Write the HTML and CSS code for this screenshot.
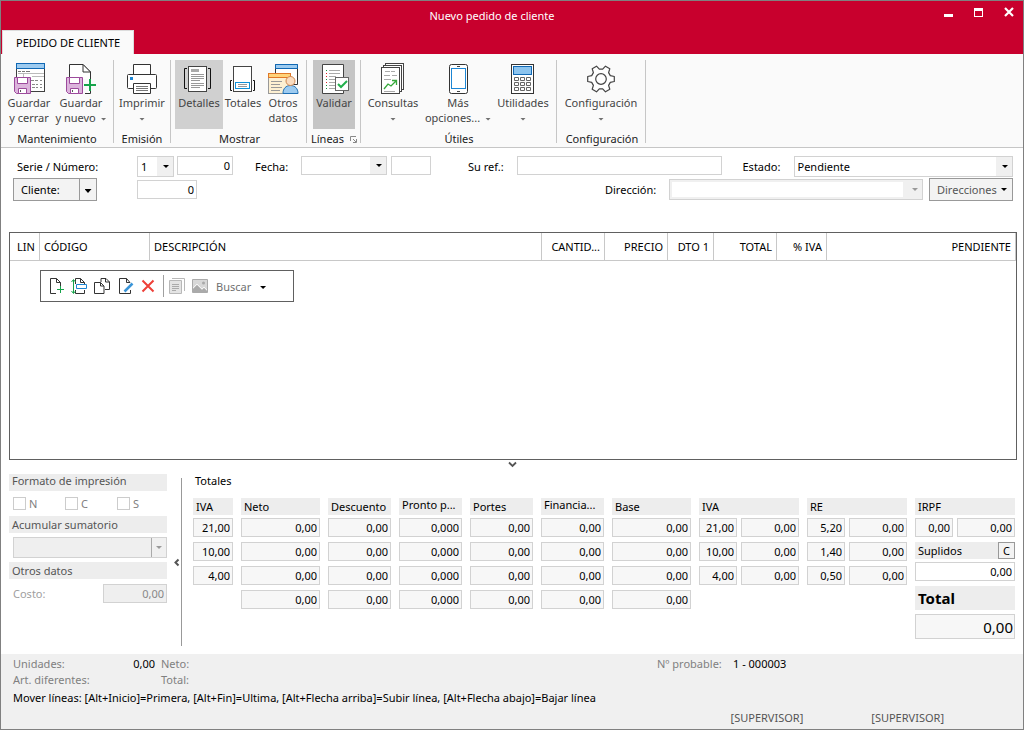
FILE: index.html
```html
<!DOCTYPE html>
<html lang="es">
<head>
<meta charset="utf-8">
<title>Nuevo pedido de cliente</title>
<link rel="stylesheet" href="styles.css">
</head>
<body>
<div class="window">
  <header class="titlebar">
    <div class="title-row">
      <h1 class="title">Nuevo pedido de cliente</h1>
      <div class="window-controls">
        <button class="win-btn" aria-label="Minimizar"><svg width="10" height="10" viewBox="0 0 10 10"><path d="M0 7h9v3H0z" fill="#fff"/></svg></button>
        <button class="win-btn" aria-label="Maximizar"><svg width="10" height="10" viewBox="0 0 10 10"><path d="M0 1h9v9H0zM1 4v5h7V4z" fill="#fff" fill-rule="evenodd"/></svg></button>
        <button class="win-btn" aria-label="Cerrar"><svg width="10" height="10" viewBox="0 0 10 10"><path d="M1 1l8 8M9 1l-8 8" stroke="#fff" stroke-width="2.200"/></svg></button>
      </div>
    </div>
    <nav class="tabs"><a class="tab" href="#pedido">PEDIDO DE CLIENTE</a></nav>
  </header>

  <div class="ribbon" id="pedido">
    <section class="group g-mant">
      <div class="tools">
        <button class="tool w52">
          <svg width="34" height="34" viewBox="0 0 34 34" fill="none"><rect x="4.500" y="1.500" width="28" height="28" fill="#fff" stroke="#404040"/><rect x="4.500" y="1.500" width="28" height="5" fill="#9dcbf0" stroke="#1068b4"/><path d="M6 9.500h3M10 9.500h3M14 9.500h4" stroke="#777"/><path d="M6 11.500h26M11.500 11v4M20 14.500h12" stroke="#bbb"/><path d="M19 18.500h3M23 18.500h3M28 18.500h2M20 22.500h3M24 22.500h2M28 22.500h2M20 25.500h3M24 25.500h2M28 25.500h2" stroke="#888"/><path d="M2.500 15.500h16v16h-14l-2-2z" fill="#dcb4dc" stroke="#9c4a9c"/><path d="M5.500 15.500h10v6h-10zM6.500 26.500h8v5h-8z" fill="#fff" stroke="#9c4a9c"/><path d="M8.500 28v2" stroke="#555"/></svg>
          <span>Guardar<br>y cerrar</span>
        </button>
        <button class="tool w52">
          <svg width="34" height="34" viewBox="0 0 34 34" fill="none"><path d="M5.500 15V2.500H19L26.500 10v8M26.500 28v3.500H21" fill="#fff" stroke="#333"/><path d="M19 2.500V10h7.500z" fill="#fff" stroke="#333"/><path d="M2.500 15.500h16v16h-14l-2-2z" fill="#dcb4dc" stroke="#9c4a9c"/><path d="M5.500 15.500h10v6h-10zM6.500 26.500h8v5h-8z" fill="#fff" stroke="#9c4a9c"/><path d="M8.500 28v2" stroke="#555"/><path d="M20 23h12M26 17v12" stroke="#16a34a" stroke-width="2"/></svg>
          <span>Guardar<br>y nuevo <i class="caret"></i></span>
        </button>
      </div>
      <h2 class="group-name">Mantenimiento</h2>
    </section>
    <section class="group g-emis">
      <div class="tools">
        <button class="tool w52">
          <svg width="34" height="34" viewBox="0 0 34 34" fill="none"><path d="M8.500 12.500v-10h17v10" fill="#fff" stroke="#333"/><rect x="2.500" y="12.500" width="29" height="14" rx="1" fill="#fff" stroke="#333"/><path d="M5 15h3v3H5z" fill="#1d86d4"/><path d="M8.500 21.500h17v10h-17z" fill="#fff" stroke="#333"/><path d="M11 24.500h12M11 26.500h12M11 28.500h12" stroke="#777"/></svg>
          <span>Imprimir<br><i class="caret lone"></i></span>
        </button>
      </div>
      <h2 class="group-name">Emisión</h2>
    </section>
    <section class="group g-most">
      <div class="tools">
        <button class="tool w48 on">
          <svg width="34" height="34" viewBox="0 0 34 34" fill="none"><rect x="6.500" y="4.500" width="18" height="25" fill="#fff" stroke="#444"/><path d="M9 7h8v3H9z" fill="#aaa"/><path d="M9 12.500h13M9 14.500h13M9 16.500h13M9 18.500h9M9 21.500h13M9 23.500h13M9 25.500h9" stroke="#999"/><path d="M5 6.500H2.500v20H5M26 6.500h2.500v20H26" stroke="#111"/></svg>
          <span>Detalles</span>
        </button>
        <button class="tool w40">
          <svg width="34" height="34" viewBox="0 0 34 34" fill="none"><rect x="7.500" y="4.500" width="18" height="25" fill="#fff" stroke="#444"/><rect x="9.500" y="20.500" width="14" height="6" fill="#fff" stroke="#1090d8"/><path d="M12 22.500h9M12 24.500h9" stroke="#999"/><path d="M6 18.500H4.500v10H6M27 18.500h1.500v10H27" stroke="#111"/></svg>
          <span>Totales</span>
        </button>
        <button class="tool w40">
          <svg width="34" height="34" viewBox="0 0 34 34" fill="none"><path d="M9.500 2.500h22v20h-22z" fill="#fff" stroke="#333"/><path d="M9.500 2.500h22v4h-22z" fill="#9dcbf0" stroke="#1068b4"/><rect x="2.500" y="11.500" width="22" height="20" fill="#fdf0d2" stroke="#999"/><rect x="2.500" y="11.500" width="22" height="4" fill="#ffd37a" stroke="#e07828"/><path d="M5 19.500h11M5 22.500h9M5 25.500h11M5 28.500h9" stroke="#999"/><path d="M17 31.500c0-5 3-8 7.500-8s7.500 3 7.500 8z" fill="#9dcbf0" stroke="#1d6fb4"/><circle cx="24.500" cy="19" r="4.500" fill="#fadcc0" stroke="#d08850"/></svg>
          <span>Otros<br>datos</span>
        </button>
      </div>
      <h2 class="group-name">Mostrar</h2>
    </section>
    <section class="group g-lin">
      <div class="tools">
        <button class="tool w42 on dark">
          <svg width="34" height="34" viewBox="0 0 34 34" fill="none"><path d="M5.500 2.500h21v29h-21z" fill="#fff" stroke="#444"/><path d="M12 8.500h11M12 11.500h11M12 14.500h7M12 17.500h6M12 20.500h6M12 23.500h6M12 26.500h8" stroke="#aaa"/><path d="M9 8.500h1M9 17.500h1M9 23.500h1M9 26.500h1" stroke="#16903c"/><path d="M9 11.500h1M9 14.500h1M9 20.500h1" stroke="#d22"/><rect x="18.500" y="15.500" width="13" height="13" fill="#fff" stroke="#666"/><path d="M21 22l3 3 6-6" stroke="#22b04c" stroke-width="2"/></svg>
          <span>Validar</span>
        </button>
      </div>
      <h2 class="group-name">Líneas <svg class="launcher" width="7" height="7" viewBox="0 0 7 7" fill="none"><path d="M.5 5V.5H6M3 3l3 3M6.500 3v3.500H3" stroke="#888"/></svg></h2>
    </section>
    <section class="group g-util">
      <div class="tools">
        <button class="tool w58">
          <svg width="34" height="34" viewBox="0 0 34 34" fill="none" stroke="#444"><rect x="9.500" y="1.500" width="18" height="26" fill="#fff"/><rect x="7.500" y="3.500" width="18" height="26" fill="#fff"/><rect x="5.500" y="5.500" width="18" height="26" fill="#fff"/><path d="M9 9.500h5M15 9.500h4M8 13.500h6M16 13.500h5M8 17.500h7M8 29.500h11" stroke="#aaa"/><path d="M8 27l4-5 3 2 5-5M16 18.500h4.500V23" stroke="#35a83a" stroke-width="1.300"/></svg>
          <span>Consultas<br><i class="caret lone"></i></span>
        </button>
        <button class="tool w72">
          <svg width="34" height="34" viewBox="0 0 34 34" fill="none"><rect x="8.500" y="2.500" width="18" height="29" rx="2" fill="#fff" stroke="#333"/><rect x="10.500" y="6.500" width="14" height="20" fill="#fff" stroke="#1d86d4"/><path d="M16 4.500h3M16 29.500h3" stroke="#444"/></svg>
          <span>Más<br>opciones... <i class="caret"></i></span>
        </button>
        <button class="tool w58">
          <svg width="34" height="34" viewBox="0 0 34 34" fill="none"><rect x="5.500" y="2.500" width="22" height="29" fill="#fff" stroke="#333"/><rect x="7.500" y="4.500" width="18" height="8" fill="#8cc4ee" stroke="#1068b4"/><path d="M8.500 15.500h4v3h-4zM14.500 15.500h4v3h-4zM20.500 15.500h4v3h-4zM8.500 20.500h4v3h-4zM14.500 20.500h4v3h-4zM20.500 20.500h4v3h-4zM8.500 25.500h4v3h-4zM14.500 25.500h4v3h-4zM20.500 25.500h4v3h-4z" stroke="#666"/></svg>
          <span>Utilidades<br><i class="caret lone"></i></span>
        </button>
      </div>
      <h2 class="group-name">Útiles</h2>
    </section>
    <section class="group g-conf">
      <div class="tools">
        <button class="tool w80">
          <svg width="34" height="34" viewBox="-17 -17 34 34" fill="none" stroke="#444" stroke-width="1.200" stroke-linejoin="round"><path d="M9.300-3.400 13.300-2.500 13.300 2.500 9.300 3.400 7.600 6.400 8.800 10.300 4.500 12.800 1.700 9.800-1.700 9.800-4.500 12.800-8.800 10.300-7.600 6.400-9.300 3.400-13.300 2.500-13.300-2.500-9.300-3.400-7.600-6.400-8.800-10.300-4.500-12.800-1.700-9.800 1.700-9.800 4.500-12.800 8.800-10.300 7.600-6.400z" fill="#fff"/><circle r="5.300"/></svg>
          <span>Configuración<br><i class="caret lone"></i></span>
        </button>
      </div>
      <h2 class="group-name">Configuración</h2>
    </section>
  </div>

  <form class="order">
    <div class="form-row">
      <label class="lbl-serie" for="serie">Serie / Número:</label>
      <span class="pick p-serie"><select id="serie"><option>1</option></select></span>
      <input class="num i-numero" aria-label="Número" value="0">
      <label class="lbl-fecha" for="fecha">Fecha:</label>
      <span class="pick short p-fecha"><select id="fecha"><option></option></select></span>
      <input class="i-hora" aria-label="Hora">
      <label class="lbl-ref" for="ref">Su ref.:</label>
      <input class="i-ref" id="ref">
      <label class="lbl-estado" for="estado">Estado:</label>
      <span class="pick p-estado"><select id="estado"><option>Pendiente</option></select></span>
    </div>
    <div class="form-row second">
      <div class="split"><button type="button">Cliente:</button><button type="button" aria-label="Más opciones de cliente"><i class="caret"></i></button></div>
      <input class="num i-cliente" aria-label="Código de cliente" value="0">
      <label class="lbl-dir" for="dir">Dirección:</label>
      <span class="pick off p-dir"><select id="dir" disabled><option></option></select></span>
      <button type="button" class="btn b-dir">Direcciones <i class="caret"></i></button>
    </div>
  </form>

  <section class="lines">
    <table>
      <colgroup><col class="c-lin"><col class="c-cod"><col><col class="c-can"><col class="c-pre"><col class="c-dto"><col class="c-tot"><col class="c-iva"><col class="c-pen"></colgroup>
      <thead><tr><th>LIN</th><th>CÓDIGO</th><th>DESCRIPCIÓN</th><th class="r">CANTID...</th><th class="r">PRECIO</th><th class="r">DTO 1</th><th class="r">TOTAL</th><th class="r">% IVA</th><th class="r">PENDIENTE</th></tr></thead>
    </table>
    <div class="line-tools">
      <button aria-label="Nueva línea"><svg width="18" height="18" viewBox="0 0 18 18" fill="none"><path d="M8 16.500H2.500v-15h6l4 4V9M8.500 1.500v4h4" stroke="#333"/><path d="M12.500 9v7M9 12.500h7" stroke="#16a34a"/></svg></button>
      <button aria-label="Insertar línea"><svg width="18" height="18" viewBox="0 0 18 18" fill="none"><path d="M4.500 7V1.500h5l4 4V7M9.500 1.500v4h4M4.500 13v3.500h9V13" stroke="#333"/><path d="M5.500 7.500h10v4h-10z" fill="#fff" stroke="#1d86d4"/><path d="M2.500 3v13M.5 5l2-2.500 2 2.500M.5 14l2 2.500 2-2.500" stroke="#16a34a"/></svg></button>
      <button aria-label="Duplicar línea"><svg width="18" height="18" viewBox="0 0 18 18" fill="none" stroke="#333"><path d="M7 5V1.500h5l3.500 3.500v7.500H11M11.500 1.500V5h4"/><path d="M.5 5.500h6l3.500 3.500v7.500H.5zM6.500 5.500V9H10" fill="#fff"/></svg></button>
      <button aria-label="Editar línea"><svg width="18" height="18" viewBox="0 0 18 18" fill="none"><path d="M13.500 13v3.500h-11v-15h7l3.500 4M9.500 1.500v4H13" stroke="#333"/><path d="M7.500 14.500l8-8" stroke="#3a95d8" stroke-width="2.500"/></svg></button>
      <button aria-label="Eliminar línea"><svg width="18" height="18" viewBox="0 0 18 18" fill="none"><path d="M2.500 3.500l11 11M13.500 3.500l-11 11" stroke="#ee4038" stroke-width="2"/></svg></button>
      <span class="sep"></span>
      <button aria-label="Documentos" disabled><svg width="18" height="18" viewBox="0 0 18 18" fill="none" stroke="#b8b8b8"><path d="M4 1.500h12.500V14" /><path d="M1.500 3.500h12v13h-12z" fill="#e4e4e4"/><path d="M4 7.500h7M4 9.500h7M4 11.500h7M4 13.500h4" stroke="#aaa"/></svg></button>
      <button aria-label="Imagen" disabled><svg width="18" height="18" viewBox="0 0 18 18" fill="none"><path d="M1.500 2.500h15v13h-15z" fill="#d8d8d8" stroke="#aaa"/><path d="M2 12l4-4 5 5 2-2 3 3v1H2z" fill="#aaa"/><path d="M2 11l4-4 5 5 2-2 3 3" stroke="#f4f4f4"/><circle cx="12.500" cy="6" r="1.500" fill="#aaa"/></svg></button>
      <button class="find">Buscar <i class="caret"></i></button>
    </div>
  </section>
  <button class="fold" aria-label="Plegar panel inferior"><svg width="9" height="7" viewBox="0 0 9 7" fill="none"><path d="M1 1.500l3.500 3.500L8 1.500" stroke="#555" stroke-width="1.800"/></svg></button>

  <div class="bottom">
    <aside class="side">
      <h3 class="head">Formato de impresión</h3>
      <div class="checks">
        <label><input type="checkbox">N</label><label><input type="checkbox">C</label><label><input type="checkbox">S</label>
      </div>
      <h3 class="head">Acumular sumatorio</h3>
      <span class="pick grey"><select aria-label="Acumular sumatorio" disabled><option></option></select></span>
      <h3 class="head">Otros datos</h3>
      <div class="cost"><label for="costo">Costo:</label><input class="num" id="costo" value="0,00" disabled></div>
    </aside>
    <div class="splitter"><button aria-label="Contraer panel"><svg width="7" height="9" viewBox="0 0 7 9" fill="none"><path d="M5.500 1.500L2.500 4.500 5.500 7.500" stroke="#555" stroke-width="2"/></svg></button></div>
    <section class="totals">
      <h2 class="totals-title">Totales</h2>
      <div class="cols">
        <div class="col c40"><h3 class="head">IVA</h3><input class="num" readonly aria-label="IVA 1" value="21,00"><input class="num" readonly aria-label="IVA 2" value="10,00"><input class="num" readonly aria-label="IVA 3" value="4,00"></div>
        <div class="col c79"><h3 class="head">Neto</h3><input class="num" readonly aria-label="Neto 1" value="0,00"><input class="num" readonly aria-label="Neto 2" value="0,00"><input class="num" readonly aria-label="Neto 3" value="0,00"><input class="num" readonly aria-label="Neto total" value="0,00"></div>
        <div class="col c63"><h3 class="head">Descuento</h3><input class="num" readonly aria-label="Descuento 1" value="0,00"><input class="num" readonly aria-label="Descuento 2" value="0,00"><input class="num" readonly aria-label="Descuento 3" value="0,00"><input class="num" readonly aria-label="Descuento total" value="0,00"></div>
        <div class="col c63"><h3 class="head raised">Pronto p...</h3><input class="num" readonly aria-label="Pronto pago 1" value="0,000"><input class="num" readonly aria-label="Pronto pago 2" value="0,000"><input class="num" readonly aria-label="Pronto pago 3" value="0,000"><input class="num" readonly aria-label="Pronto pago total" value="0,000"></div>
        <div class="col c63"><h3 class="head">Portes</h3><input class="num" readonly aria-label="Portes 1" value="0,00"><input class="num" readonly aria-label="Portes 2" value="0,00"><input class="num" readonly aria-label="Portes 3" value="0,00"><input class="num" readonly aria-label="Portes total" value="0,00"></div>
        <div class="col c63"><h3 class="head raised">Financia...</h3><input class="num" readonly aria-label="Financiación 1" value="0,00"><input class="num" readonly aria-label="Financiación 2" value="0,00"><input class="num" readonly aria-label="Financiación 3" value="0,00"><input class="num" readonly aria-label="Financiación total" value="0,00"></div>
        <div class="col c79"><h3 class="head">Base</h3><input class="num" readonly aria-label="Base 1" value="0,00"><input class="num" readonly aria-label="Base 2" value="0,00"><input class="num" readonly aria-label="Base 3" value="0,00"><input class="num" readonly aria-label="Base total" value="0,00"></div>
        <div class="col c100"><h3 class="head">IVA</h3>
          <div class="pair"><input class="num" readonly aria-label="% IVA 1" value="21,00"><input class="num" readonly aria-label="Cuota IVA 1" value="0,00"></div>
          <div class="pair"><input class="num" readonly aria-label="% IVA 2" value="10,00"><input class="num" readonly aria-label="Cuota IVA 2" value="0,00"></div>
          <div class="pair"><input class="num" readonly aria-label="% IVA 3" value="4,00"><input class="num" readonly aria-label="Cuota IVA 3" value="0,00"></div></div>
        <div class="col c100"><h3 class="head">RE</h3>
          <div class="pair"><input class="num" readonly aria-label="% RE 1" value="5,20"><input class="num" readonly aria-label="Cuota RE 1" value="0,00"></div>
          <div class="pair"><input class="num" readonly aria-label="% RE 2" value="1,40"><input class="num" readonly aria-label="Cuota RE 2" value="0,00"></div>
          <div class="pair"><input class="num" readonly aria-label="% RE 3" value="0,50"><input class="num" readonly aria-label="Cuota RE 3" value="0,00"></div></div>
        <div class="col c100"><h3 class="head">IRPF</h3>
          <div class="pair"><input class="num" readonly aria-label="% IRPF" value="0,00"><input class="num" readonly aria-label="Cuota IRPF" value="0,00"></div>
          <div class="head supl"><label for="suplidos">Suplidos</label><button>C</button></div>
          <input class="num" id="suplidos" value="0,00">
          <label class="head grand" for="total">Total</label>
          <input class="num grand-value" id="total" readonly value="0,00">
        </div>
      </div>
    </section>
  </div>

  <footer class="status">
    <div class="facts">
      <span>Unidades:</span><b>0,00</b><span>Neto:</span><span>Nº probable:</span><b>1 - 000003</b>
      <span>Art. diferentes:</span><b></b><span>Total:</span>
    </div>
    <p class="hint">Mover líneas: [Alt+Inicio]=Primera, [Alt+Fin]=Ultima, [Alt+Flecha arriba]=Subir línea, [Alt+Flecha abajo]=Bajar línea</p>
    <div class="users"><span>[SUPERVISOR]</span><span>[SUPERVISOR]</span></div>
  </footer>
</div>
</body>
</html>
```
FILE: styles.css
```css
* { box-sizing: border-box; }
body { margin: 0; background: #fff; }
body, button, input, select, textarea { font-family: "Noto Sans", "Open Sans", sans-serif; font-size: 11px; line-height: 15px; color: #000; }
h1, h2, h3, p { margin: 0; font-size: 11px; font-weight: 400; }
button { margin: 0; padding: 0; border: 0; background: none; }
svg { display: block; }

.window { display: flex; flex-direction: column; min-height: 100vh; border: 1px solid #808080; }

.titlebar { background: #c8002d; }
.title-row { display: grid; grid-template-columns: 1fr auto 1fr; height: 29px; }
.title { grid-column: 2; padding-right: 40px; line-height: 29px; color: #fff; }
.window-controls { display: flex; justify-content: flex-end; align-items: flex-start; gap: 20px; padding: 6px 9px 0 0; }
.win-btn { width: 10px; height: 10px; }
.tabs { display: flex; padding-left: 1px; }
.tab { height: 24px; padding: 0 13px; border: 1px solid #dcdcdc; border-bottom: 0; background: #fafafa; color: #000; line-height: 24px; text-decoration: none; }

.ribbon { display: flex; height: 94px; padding: 6px 0 4px; border-bottom: 1px solid #c6c6c6; background: #fafafa; }
.group { display: flex; flex-direction: column; justify-content: space-between; border-right: 1px solid #c6c6c6; }
.g-mant { width: 113px; padding-left: 2px; }
.g-emis { width: 57px; padding-left: 2px; }
.g-most { width: 136px; padding-left: 4px; }
.g-lin { width: 54px; padding-left: 6px; }
.g-util { width: 196px; padding-left: 3px; }
.g-conf { width: 89px; padding-left: 4px; }
.tools { display: flex; }
.tool { display: flex; flex-direction: column; align-items: center; height: 69px; padding-top: 2px; color: #444; white-space: nowrap; }
.tool svg { flex: none; margin-bottom: -1px; }
.tool span { text-align: center; }
.w40 { width: 40px; }
.w42 { width: 42px; }
.w48 { width: 48px; }
.w52 { width: 52px; }
.w58 { width: 58px; }
.w72 { width: 72px; }
.w80 { width: 80px; }
.on { background: #d0d0d0; }
.dark { background: #c5c5c5; }
.group-name { margin: 0 2px -3px 0; line-height: 14px; text-align: center; color: #222; }
.g-lin .group-name { display: flex; align-items: center; gap: 6px; margin-left: -2px; }

.caret { display: inline-block; width: 7px; height: 4px; background: currentColor; clip-path: polygon(0 0, 100% 0, 50% 100%); vertical-align: middle; }
.tool .caret { width: 6px; height: 3px; margin-left: 2px; color: #707070; }
.tool .lone { margin-left: 0; }

input { min-width: 0; height: 19px; padding: 0 2px 1px; border: 1px solid #d2d2d2; border-radius: 0; background: #fff; }
.num { text-align: right; }
.pick { display: grid; height: 21px; }
.pick select { grid-area: 1 / 1; width: 100%; min-width: 0; padding: 0 3px; border: 1px solid #d2d2d2; border-radius: 0; appearance: none; color: #000; background: linear-gradient(to left, #f0f0f0 16px, #fff 16px); }
.pick::after { content: ""; grid-area: 1 / 1; align-self: center; justify-self: end; width: 6px; height: 3px; margin-right: 5px; background: #000; clip-path: polygon(0 0, 100% 0, 50% 100%); pointer-events: none; }
.short { height: 19px; }
.btn, .split { height: 23px; border: 1px solid #999; background: #f3f3f3; }

.order { display: flex; flex-direction: column; gap: 1px; padding: 8px 10px 0 12px; }
.form-row { display: flex; align-items: flex-start; height: 21px; }
.form-row label { line-height: 22px; white-space: nowrap; }
.second { height: 23px; align-items: center; }
.lbl-serie { width: 124px; padding-left: 4px; }
.p-serie { width: 37px; margin-right: 3px; }
.i-numero { width: 56px; }
.lbl-fecha { width: 68px; padding-left: 22px; }
.p-fecha { width: 86px; margin-right: 4px; }
.i-hora { width: 40px; }
.lbl-ref { width: 86px; padding-left: 37px; }
.i-ref { flex: 1 1 204px; }
.lbl-estado { width: 72px; padding-left: 21px; }
.p-estado { flex: 1 1 219px; }
.split { display: flex; width: 84px; margin-right: 40px; }
.split button { flex: 1; padding-left: 7px; text-align: left; }
.split button + button { flex: 0 0 17px; padding: 0; border-left: 1px solid #999; text-align: center; line-height: 19px; }
.i-cliente { width: 60px; }
.lbl-dir { margin-left: auto; width: 64px; }
.p-dir { width: 254px; margin-right: 6px; }
.pick.off select { background: #f0f0f0 linear-gradient(#fff, #fff) 2px 2px / calc(100% - 21px) calc(100% - 4px) no-repeat; opacity: 1; }
.pick.off::after, .pick.grey::after { background: #999; }
.b-dir { display: flex; align-items: center; justify-content: space-between; width: 84px; padding: 0 5px 0 7px; color: #555; white-space: nowrap; }
.b-dir .caret { width: 6px; height: 3px; color: #000; }

.lines { flex: 1; min-height: 228px; margin: 31px 6px 0 8px; border: 1px solid #606060; }
.lines table { width: 100%; border-collapse: separate; border-spacing: 0; table-layout: fixed; }
.lines th { height: 28px; padding: 0 4px; border-right: 1px solid #c8c8c8; border-bottom: 1px solid #c8c8c8; font-weight: 400; text-align: left; white-space: nowrap; }
.lines th:first-child { padding: 0 0 0 7px; }
.lines th.r { text-align: right; padding-left: 0; }
.c-lin { width: 30px; }
.c-cod { width: 110px; }
.c-can, .c-pre, .c-tot { width: 63px; }
.c-dto { width: 46px; }
.c-iva { width: 50px; }
.c-pen { width: 189px; }
.line-tools { display: flex; align-items: center; gap: 5px; width: 254px; height: 32px; margin: 9px 0 0 30px; padding-left: 7px; border: 1px solid #606060; }
.sep { width: 1px; height: 22px; margin-right: -1px; background: #a0a0a0; }
.find { margin-left: 2px; color: #707070; }
.find .caret { width: 6px; height: 3px; margin-left: 6px; color: #000; }
.fold { display: flex; justify-content: center; align-items: center; height: 9px; margin-bottom: 5px; }

.bottom { display: flex; height: 180px; padding: 0 8px; }
.side { display: flex; flex-direction: column; width: 158px; color: #555; }
.head { display: block; height: 17px; padding: 0 3px; background: #ededed; line-height: 17px; white-space: nowrap; overflow: hidden; }
.side .head { color: #555; }
.side .head:first-child { line-height: 14px; }
.checks { display: flex; height: 25px; padding-left: 4px; align-items: center; }
.checks label { display: flex; flex: none; align-items: center; gap: 3px; width: 52px; color: #808080; }
.checks label:last-child { width: auto; }
.checks input { appearance: none; width: 13px; height: 13px; margin: 0; padding: 0; border: 1px solid #ccc; }
.pick.grey { margin: 4px 0 4px 4px; }
.pick.grey select { background: linear-gradient(to left, #f0f0f0 14px, #aaa 14px, #aaa 15px, #efefef 15px); opacity: 1; }
.cost { display: flex; justify-content: space-between; align-items: center; padding: 5px 0 0 4px; color: #a0a0a0; }
.cost input { width: 64px; background: #efefef; color: #888; }
.splitter { display: flex; align-items: center; width: 9px; height: 168px; margin: 4px 11px 0 6px; border-right: 1px solid #999; }

.totals { flex: 1; min-width: 0; }
.totals-title { padding-left: 2px; line-height: 14px; margin-bottom: 10px; color: #000; }
.cols { display: flex; gap: 8px; }
.col { display: flex; flex-direction: column; gap: 5px; min-width: 0; }
.col .head { margin-bottom: -2px; }
.col .raised { line-height: 14px; }
.col input { width: 100%; background: #f7f7f7; }
.c40 { flex: 40 1 0; }
.c63 { flex: 63 1 0; }
.c79 { flex: 79 1 0; }
.c100 { flex: 100 1 0; }
.pair { display: grid; grid-template-columns: 38fr 58fr; gap: 4px; }
.col .supl { display: flex; justify-content: space-between; padding-right: 0; }
.supl button { width: 17px; border: 1px solid #999; background: #f3f3f3; line-height: 14px; }
.col #suplidos { background: #fff; }
.col .grand { height: 24px; font-size: 15px; font-weight: 700; line-height: 25px; margin-bottom: -1px; }
.col .grand-value { height: 25px; font-size: 15px; padding: 1px 1px 0; }

.status { height: 75px; padding: 2px 12px 0; background: #f0f0f0; }
.facts { display: grid; grid-template-columns: 96px 46px 502px 76px 1fr; grid-auto-rows: 16px; color: #808080; }
.facts b { font-weight: 400; color: #000; }
.facts b:nth-child(2) { text-align: right; }
.facts span:nth-child(3), .facts span:nth-child(8) { padding-left: 6px; }
.hint { padding-top: 2px; line-height: 16px; color: #000; white-space: nowrap; }
.users { display: flex; justify-content: flex-end; gap: 68px; padding: 4px 67px 0 0; color: #555; }
```
